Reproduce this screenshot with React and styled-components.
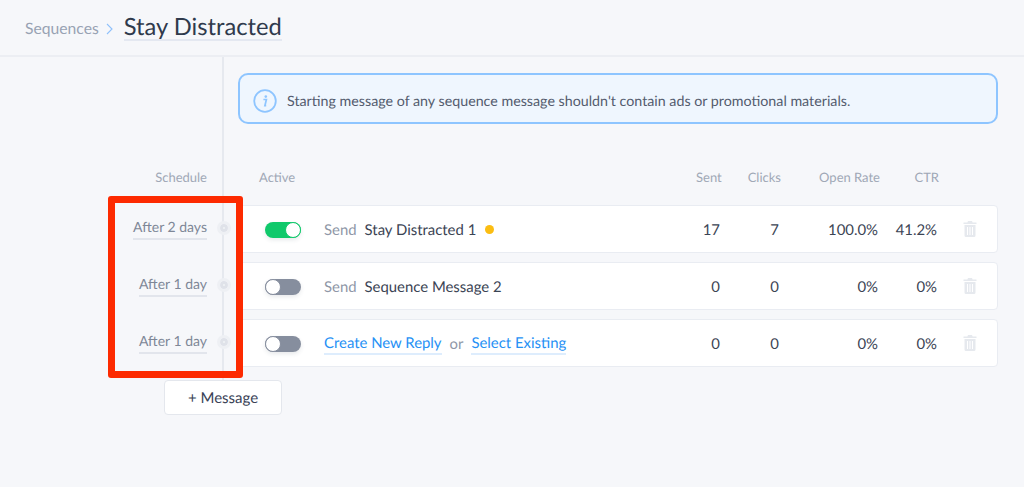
import React from "react";
import styled, { createGlobalStyle } from "styled-components";

const Global = createGlobalStyle`
  html, body { margin: 0; padding: 0; background: #f6f7fa; }
  body { font-family: Lato, "Open Sans", sans-serif; color: #394256; overflow: hidden; text-rendering: geometricPrecision; }
  #root { height: 487px; }
`;
const Page = styled.div`
  position: relative;
  width: 1024px;
  height: 487px;
  overflow: hidden;
  background: #f6f7fa;
`;
const Header = styled.header`
  height: 55px;
  border-bottom: 2px solid #eceef3;
  display: flex;
  align-items: center;
  padding-left: 25px;
`;
const Crumb = styled.span`
  font-size: 15.7px;
  color: #98a2b3;
  margin-top: 3px;
`;
const Chevron = styled.svg`
  width: 7px;
  height: 12px;
  margin: 2px 0 0 7px;
  fill: none;
  stroke: #8fc1fb;
  stroke-width: 1.1;
`;
const Title = styled.h1`
  margin: 0 0 0 11px;
  font-size: 23.7px;
  font-weight: 400;
  line-height: 24px;
  color: #2f3a4c;
  border-bottom: 2px solid #e4e8f1;
`;
const Board = styled.div`
  display: grid;
  grid-template-columns: 224px 1fr;
  grid-auto-rows: min-content;
`;
const Rail = styled.div`
  position: relative;
  box-sizing: border-box;
  height: ${(p) => p.$h}px;
  border-right: 2px solid #e6e9ef;
  display: flex;
  justify-content: flex-end;
  align-items: ${(p) => p.$align || "center"};
  padding-right: 15px;
`;
const Notice = styled.div`
  margin: 16px 26px 0 14px;
  height: 51px;
  box-sizing: border-box;
  border: 2px solid #8ec5ff;
  border-radius: 10px;
  background: #eff6fe;
  display: flex;
  align-items: center;
  padding: 5px 0 0 13px;
  gap: 10px;
  font-size: 14.25px;
  color: #545c6e;
`;
const HeadLabel = styled.span`
  font-size: 13px;
  color: #a0a8b6;
`;
const HeadRow = styled.div`
  display: grid;
  grid-template-columns: 35px 402px 25px 60px 99px 59px;
  padding-left: 35px;
  align-items: center;
  height: 28px;
  margin-top: 39px;
  & > :nth-child(n + 3) { text-align: right; }
`;
const ScheduleLabel = styled(HeadLabel)`
  margin-top: 39px;
  line-height: 28px;
`;
const Wrap = styled.div`
  padding: 0 26px 9px 14px;
  height: 57px;
  box-sizing: border-box;
`;
const Card = styled.div`
  height: 48px;
  box-sizing: border-box;
  background: #fff;
  border: 1px solid #e9ecf2;
  border-radius: 4px;
  display: grid;
  grid-template-columns: 36px 23px 371px 25px 59px 99px 59px 26px 14px;
  padding: 1px 0 0 26px;
  align-items: center;
  font-size: 14.9px;
  color: #3b4454;
`;
const Delay = styled.span`
  font-size: 14px;
  line-height: 21px;
  color: #7e8797;
  padding-bottom: 1px;
  border-bottom: 2px solid #e2e5ec;
  margin-top: -12px;
`;
const Dot = styled.span`
  position: absolute;
  right: -6px;
  top: 19px;
  width: 2px;
  height: 2px;
  border: 3px solid #dfe2e9;
  outline: 3px solid #eef0f4;
  border-radius: 50%;
  background: #f1f3f6;
`;
const Track = styled.span`
  width: 36px;
  height: 16px;
  border-radius: 8px;
  background: ${(p) => (p.$on ? "#10c96b" : "#868e9e")};
  display: flex;
  justify-content: ${(p) => (p.$on ? "flex-end" : "flex-start")};
  align-items: center;
  box-shadow: 0 2px 4px rgba(60, 70, 90, 0.12);
`;
const Knob = styled.span`
  width: 14px;
  height: 14px;
  border-radius: 50%;
  background: #fff;
  border: 1px solid ${(p) => (p.$on ? "#10c96b" : "#868e9e")};
`;
const Name = styled.span`
  display: flex;
  align-items: center;
  white-space: nowrap;
`;
const Muted = styled.span`
  color: #8f97a7;
  margin-right: 8px;
`;
const Status = styled.span`
  width: 9px;
  height: 9px;
  border-radius: 50%;
  background: #fbbd12;
  margin-left: 9px;
`;
const LinkText = styled.span`
  color: #2691f5;
  line-height: 19px;
  margin-top: 2px;
  border-bottom: 2px solid #deedfd;
`;
const Or = styled.span`
  color: #8f97a7;
  margin: 0 8px;
`;
const Num = styled.span`
  text-align: right;
`;
const Trash = styled.svg`
  width: 14px;
  height: 16px;
  margin-top: -2px;
  fill: #e6e9ee;
`;
const Add = styled.button`
  display: block;
  margin: 0 0 0 164px;
  width: 118px;
  height: 35px;
  background: #fff;
  border: 1px solid #e4e7ed;
  border-radius: 4px;
  font: 400 15px Lato, sans-serif;
  text-rendering: geometricPrecision;
  color: #394256;
  padding: 0;
`;
const Highlight = styled.div`
  position: absolute;
  left: 108px;
  top: 196px;
  width: 135px;
  height: 182px;
  box-sizing: border-box;
  border: 7px solid #fd2a00;
  border-radius: 3px;
`;

const TrashIcon = () => (
  <Trash viewBox="0 0 14 16">
    <path d="M5 0h4l.6 1.6H13.500V3H.5V1.600H4.400z" />
    <path d="M1.500 4h11v10.500q0 1.500-1.500 1.500H3q-1.500 0-1.500-1.500zM4 6v8h1V6zm2.500 0v8h1V6zM9 6v8h1V6z" fillRule="evenodd" />
  </Trash>
);

const Stats = ({ sent, clicks, open, ctr }) => (
  <>
    <Num>{sent}</Num>
    <Num>{clicks}</Num>
    <Num>{open}</Num>
    <Num>{ctr}</Num>
  </>
);

const rows = [
  { delay: "After 2 days", on: true, stats: { sent: 17, clicks: 7, open: "100.0%", ctr: "41.2%" }, name: <Name><Muted>Send</Muted>Stay Distracted 1<Status /></Name> },
  { delay: "After 1 day", on: false, stats: { sent: 0, clicks: 0, open: "0%", ctr: "0%" }, name: <Name><Muted>Send</Muted>Sequence Message 2</Name> },
  { delay: "After 1 day", on: false, stats: { sent: 0, clicks: 0, open: "0%", ctr: "0%" }, name: <Name><LinkText>Create New Reply</LinkText><Or>or</Or><LinkText>Select Existing</LinkText></Name> },
];

export default function App() {
  return (
    <Page>
      <Global />
      <Header>
        <Crumb>Sequences</Crumb>
        <Chevron viewBox="0 0 7 12"><path d="M1 1l5 5-5 5" /></Chevron>
        <Title>Stay Distracted</Title>
      </Header>
      <Board>
        <Rail $h={67} />
        <Notice>
          <svg width="24" height="24" viewBox="0 0 24 24" fill="none">
            <circle cx="12" cy="12" r="10.800" stroke="#8ec5ff" strokeWidth="1.800" />
            <circle cx="12.800" cy="7.600" r="1.300" fill="#8ec5ff" />
            <path d="M10.400 10.500h3l-1.500 6.200h1.300" stroke="#8ec5ff" strokeWidth="1.700" fill="none" />
          </svg>
          Starting message of any sequence message shouldn't contain ads or promotional materials.
        </Notice>
        <Rail $h={81} $align="flex-start"><ScheduleLabel>Schedule</ScheduleLabel></Rail>
        <HeadRow>
          <HeadLabel>Active</HeadLabel>
          <span />
          <HeadLabel>Sent</HeadLabel>
          <HeadLabel>Clicks</HeadLabel>
          <HeadLabel>Open Rate</HeadLabel>
          <HeadLabel>CTR</HeadLabel>
        </HeadRow>
        {rows.map((r, i) => (
          <React.Fragment key={i}>
            <Rail $h={57}>
              <Delay>{r.delay}</Delay>
              <Dot />
            </Rail>
            <Wrap>
              <Card>
                <Track $on={r.on}><Knob $on={r.on} /></Track>
                <span />
                {r.name}
                <Stats {...r.stats} />
                <span />
                <TrashIcon />
              </Card>
            </Wrap>
          </React.Fragment>
        ))}
        <Rail $h={4} />
        <span />
      </Board>
      <Add>+ Message</Add>
      <Highlight />
    </Page>
  );
}
